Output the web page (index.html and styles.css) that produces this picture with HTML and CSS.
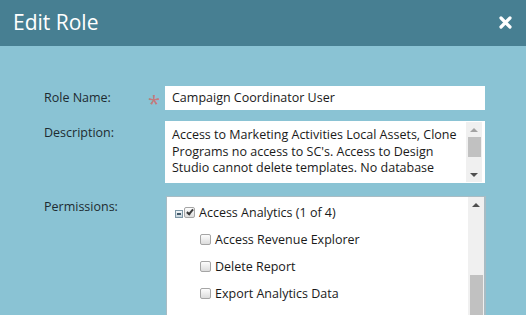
FILE: index.html
```html
<!DOCTYPE html>
<html lang="en">
  <head>
    <meta charset="UTF-8" />
    <title>Edit Role</title>
    <link rel="stylesheet" href="styles.css">
  </head>
  <body>
    <div class="dialog">
      <div class="dialog-head">
        <span class="title">Edit Role</span>
        <svg class="close" width="13" height="13" viewBox="0 0 13 13">
          <path d="M2 2 L11 11 M11 2 L2 11" stroke="white" stroke-width="3.2" stroke-linecap="round" />
        </svg>
      </div>

      <div class="form">
        <div class="label">Role Name:</div>
        <div class="req">*</div>
        <div class="field name-field">Campaign Coordinator User</div>

        <div class="label">Description:</div>
        <div class="req"></div>
        <div class="field desc-field">
          <div class="desc-text">Access to Marketing Activities Local Assets, Clone Programs no access to SC's. Access to Design Studio cannot delete templates. No database</div>
          <div class="scroll">
            <span class="arrow up light"></span>
            <span class="thumb desc-thumb"></span>
            <span class="spacer"></span>
            <span class="arrow down"></span>
          </div>
        </div>

        <div class="label perm-label">Permissions:</div>
        <div class="req"></div>
        <div class="field perm-field">
          <div class="tree">
            <div class="node parent">
              <span class="toggle"></span>
              <span class="check checked"></span>
              <span>Access Analytics (1 of 4)</span>
            </div>
            <div class="node child">
              <span class="check"></span>
              <span>Access Revenue Explorer</span>
            </div>
            <div class="node child">
              <span class="check"></span>
              <span>Delete Report</span>
            </div>
            <div class="node child">
              <span class="check"></span>
              <span>Export Analytics Data</span>
            </div>
          </div>
          <div class="scroll perm-scroll">
            <span class="arrow up"></span>
            <span class="thumb perm-thumb"></span>
          </div>
        </div>
      </div>
    </div>
  </body>
</html>
```

FILE: styles.css
```css
body {
  margin: 0;
  font-family: "Open Sans", Arial, sans-serif;
  background: #8ac3d4;
  overflow: hidden;
}
.dialog {
  width: 526px;
  height: 315px;
  overflow: hidden;
}
.dialog-head {
  height: 46px;
  background: #477f92;
  color: white;
  display: flex;
  align-items: center;
  justify-content: space-between;
  padding: 0 14px 0 13px;
}
.title {
  font-size: 21px;
  margin-top: -2px;
}
.close {
  margin-top: -2px;
}
.form {
  display: grid;
  grid-template-columns: 104px 17px 320px;
  align-items: start;
  row-gap: 11px;
  padding: 40px 0 0 44px;
  font-size: 12.5px;
  color: #1d2b31;
}
.label {
  line-height: 24px;
}
.perm-label {
  line-height: 26px;
}
.req {
  color: #c47a7c;
  font-size: 22px;
  line-height: 14px;
  height: 14px;
  padding-top: 9px;
}
.field {
  background: white;
  color: #1a1a1a;
}
.name-field {
  height: 24px;
  line-height: 24px;
  padding-left: 7px;
}
.desc-field {
  height: 62px;
  display: flex;
}
.desc-text {
  flex: 1;
  padding: 6px 0 0 7px;
  line-height: 16.5px;
}
.scroll {
  width: 16px;
  margin: 1px 3px 1px 0;
  background: #f0f0f0;
  display: flex;
  flex-direction: column;
  align-items: center;
}
.arrow {
  width: 0;
  height: 0;
  border-left: 4px solid transparent;
  border-right: 4px solid transparent;
  margin: 6px 0 5px;
}
.arrow.up {
  border-bottom: 4px solid #505050;
}
.arrow.up.light {
  border-bottom-color: #a3a3a3;
}
.arrow.down {
  border-top: 4px solid #505050;
}
.thumb {
  width: 13px;
  background: #c1c1c1;
}
.desc-thumb {
  height: 20px;
}
.spacer {
  flex: 1;
}
.perm-field {
  height: 140px;
  margin-top: 2px;
  border: 1px solid #a8bcc4;
  border-right-width: 2px;
  margin-left: 1px;
  margin-right: -1px;
  display: flex;
}
.perm-scroll {
  margin: 0;
}
.perm-thumb {
  height: 60px;
  margin-top: 63px;
  flex: none;
}
.tree {
  flex: 1;
  padding: 5px 0 0 8px;
}
.node {
  display: flex;
  align-items: center;
  height: 27px;
}
.parent {
  height: 21px;
  margin-bottom: 3px;
}
.child {
  padding-left: 25px;
}
.toggle {
  width: 6px;
  height: 6px;
  border: 1px solid #7e97a6;
  background: linear-gradient(#f4f7f9, #c6d3dc);
  position: relative;
  margin-right: 1px;
  margin-top: 2px;
}
.toggle::after {
  content: "";
  position: absolute;
  left: 1px;
  top: 2px;
  width: 4px;
  height: 2px;
  background: #42596a;
}
.check {
  width: 9px;
  height: 9px;
  border: 1px solid #a5a5a5;
  border-radius: 2px;
  background: linear-gradient(#fdfdfd, #dcdcdc);
  margin-right: 4px;
  position: relative;
}
.check.checked::after {
  content: "";
  position: absolute;
  left: 3px;
  top: 0px;
  width: 2px;
  height: 5px;
  border: solid #3a3a3a;
  border-width: 0 2px 2px 0;
  transform: rotate(40deg);
}
```
